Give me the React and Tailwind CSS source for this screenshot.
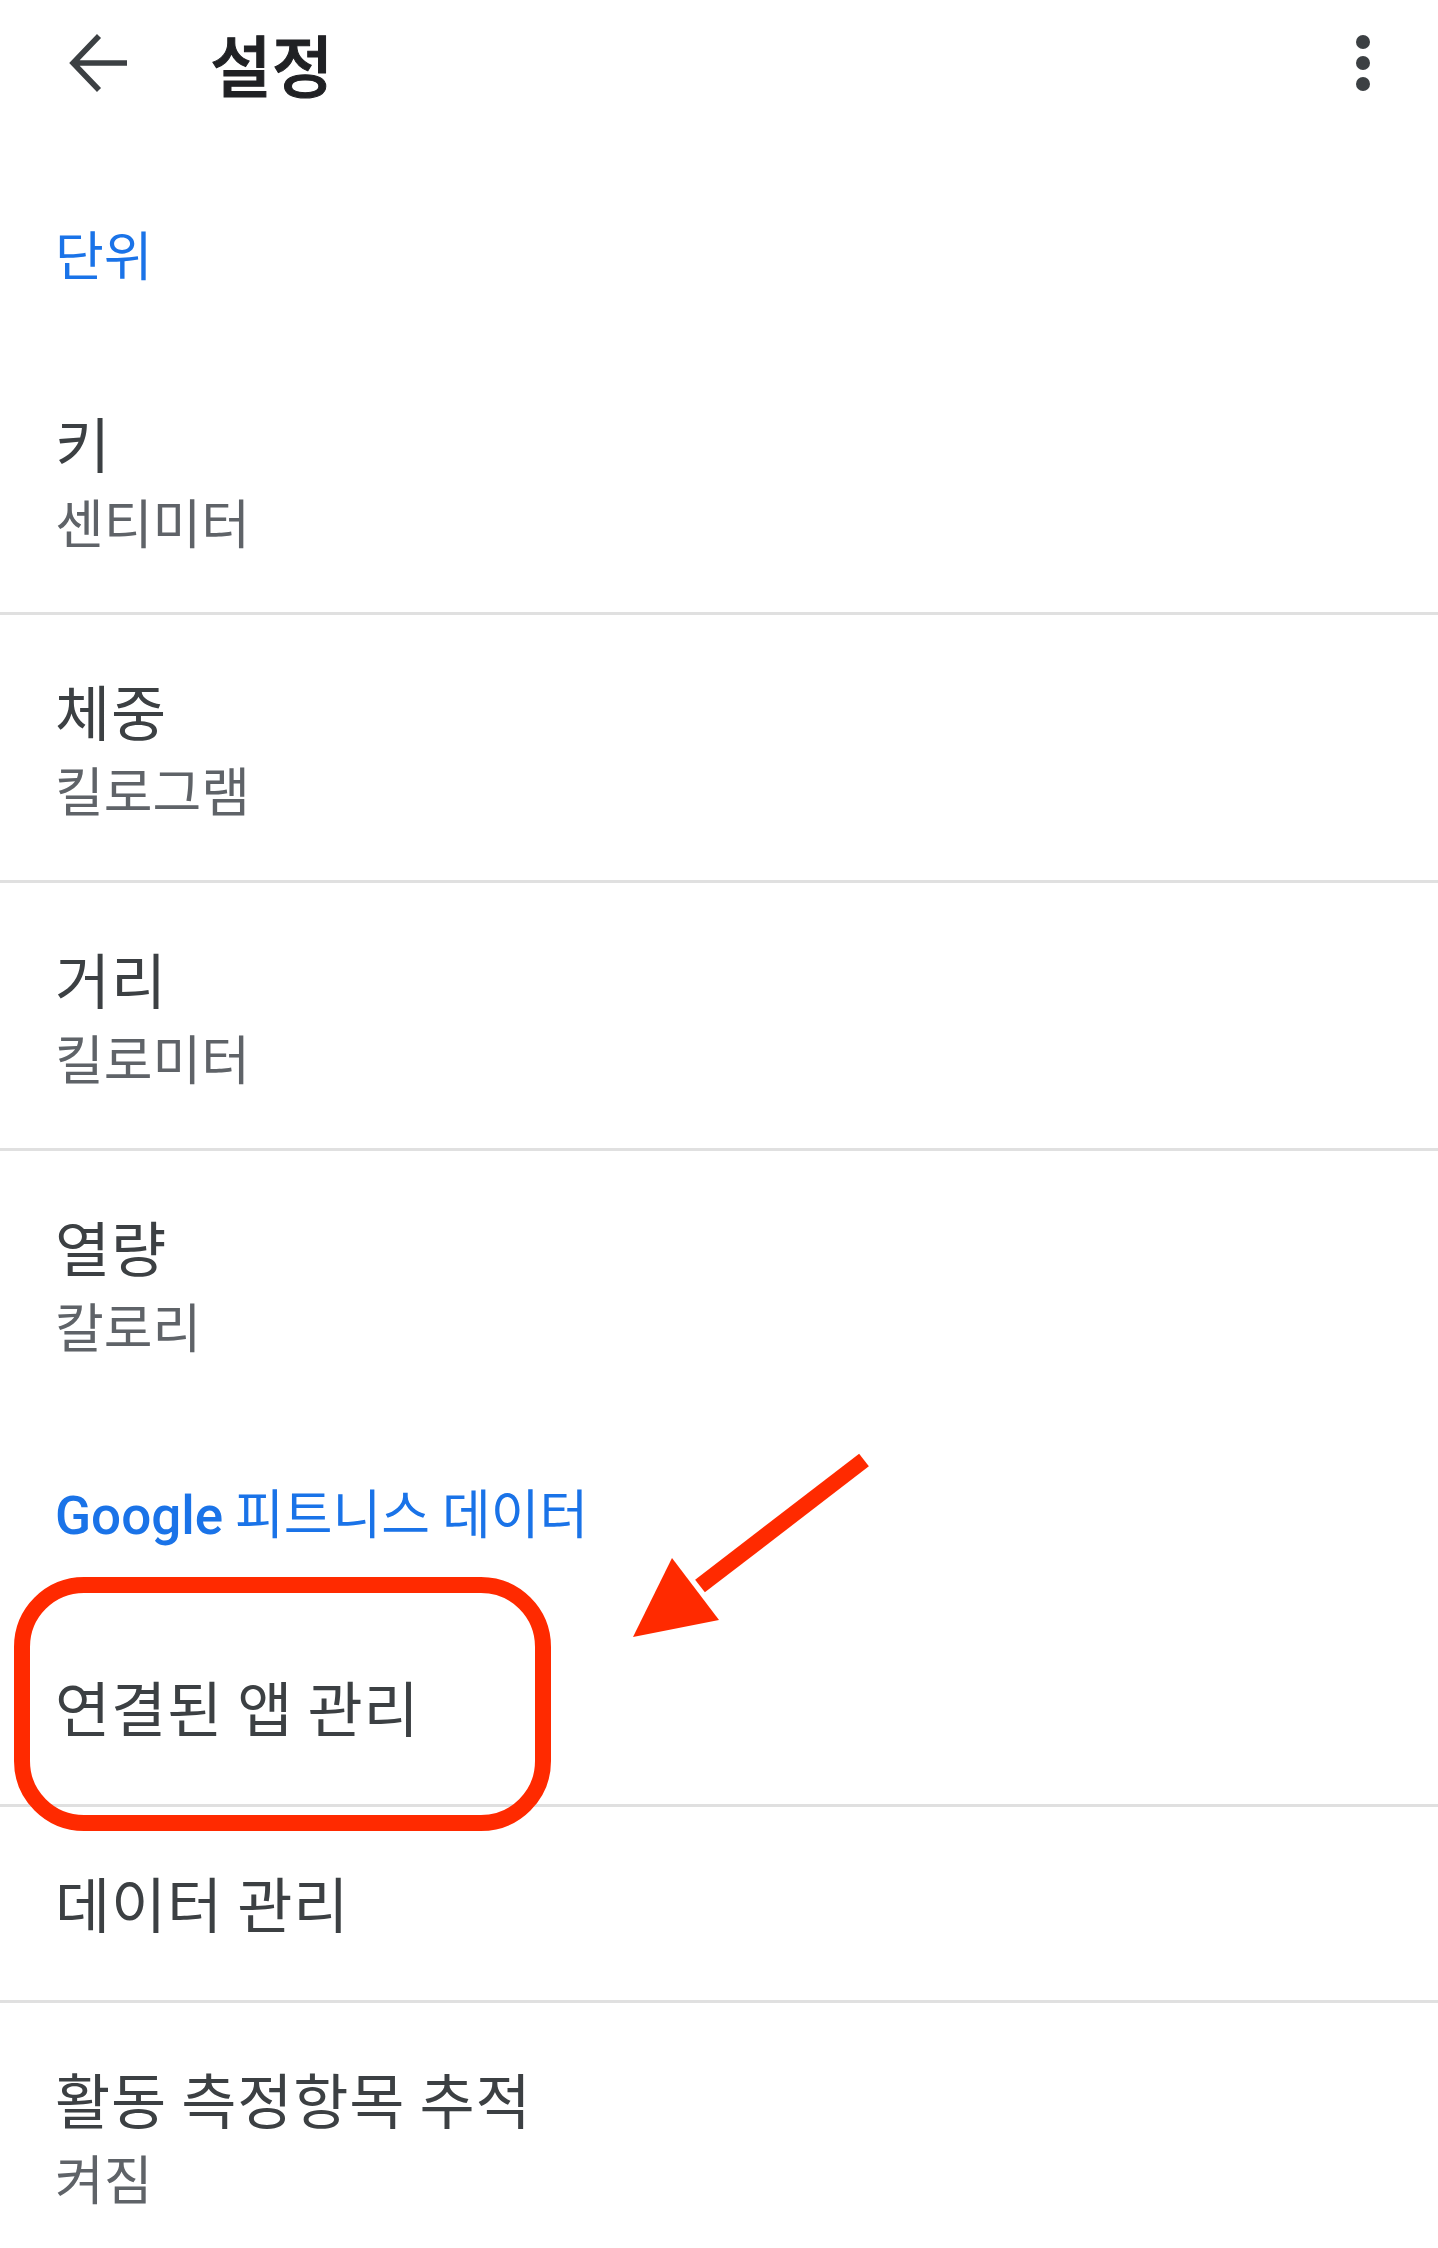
import React from "react";

const twoLine = [
  { title: "키", sub: "센티미터" },
  { title: "체중", sub: "킬로그램" },
  { title: "거리", sub: "킬로미터" },
];

function TwoLineItem({ title, sub, divider = true }) {
  return (
    <div
      className={
        divider
          ? "h-[268px] border-b-[3px] border-[#e0e0e0] pl-[55px] pt-[55px]"
          : "h-[265px] pl-[55px] pt-[55px]"
      }
    >
      <div className="text-[60px] leading-[80px] tracking-[0.8px] text-[#3c4043]">{title}</div>
      <div className="text-[53px] leading-[78px] text-[#5f6368]">{sub}</div>
    </div>
  );
}

function OneLineItem({ title }) {
  return (
    <div className="flex h-[196px] items-center border-b-[3px] border-[#e0e0e0] pb-[4px] pl-[55px]">
      <div className="text-[60px] leading-[80px] tracking-[0.8px] text-[#3c4043]">{title}</div>
    </div>
  );
}

export default function App() {
  return (
    <div className="relative min-h-screen w-full overflow-hidden bg-white font-['Noto_Sans_CJK_KR','Noto_Sans',sans-serif]">
      <header className="flex h-[126px] items-center justify-between pl-[57px] pr-[33px]">
        <div className="flex items-center">
          <svg width="84" height="84" viewBox="0 0 24 24" fill="none">
            <path
              d="M20 12H4.8M12 4.3L4.6 12L12 19.7"
              stroke="#3c4043"
              strokeWidth="1.6"
              strokeLinecap="butt"
              strokeLinejoin="miter"
            />
          </svg>
          <h1 className="ml-[69px] text-[67px] font-medium leading-[80px] text-[#202124] [-webkit-text-stroke:1px_#202124]">
            설정
          </h1>
        </div>
        <svg width="84" height="84" viewBox="0 0 24 24">
          <circle cx="12" cy="6" r="2" fill="#3c4043" />
          <circle cx="12" cy="12" r="2" fill="#3c4043" />
          <circle cx="12" cy="18" r="2" fill="#3c4043" />
        </svg>
      </header>

      <div className="pb-[59px] pl-[55px] pt-[92px] text-[53px] leading-[70px] text-[#1a73e8]">단위</div>

      {twoLine.map((it) => (
        <TwoLineItem key={it.title} title={it.title} sub={it.sub} />
      ))}
      <TwoLineItem title="열량" sub="칼로리" divider={false} />

      <div className="py-[60px] pl-[55px] text-[53px] leading-[70px] text-[#1a73e8]">
        <span className="font-['Roboto','Noto_Sans_CJK_KR',sans-serif] font-medium">Google</span> 피트니스 데이터
      </div>

      <OneLineItem title="연결된 앱 관리" />
      <OneLineItem title="데이터 관리" />
      <TwoLineItem title="활동 측정항목 추적" sub="켜짐" divider={false} />

      <svg
        className="pointer-events-none absolute left-0 top-0"
        width="1438"
        height="2248"
        viewBox="0 0 1438 2248"
        fill="none"
      >
        <rect x="22" y="1585" width="521" height="238" rx="62" stroke="#ff2a00" strokeWidth="16" />
        <line x1="864" y1="1460" x2="700" y2="1586" stroke="#ff2a00" strokeWidth="16" />
        <polygon points="633,1637 672,1558 719,1620" fill="#ff2a00" />
      </svg>
    </div>
  );
}
